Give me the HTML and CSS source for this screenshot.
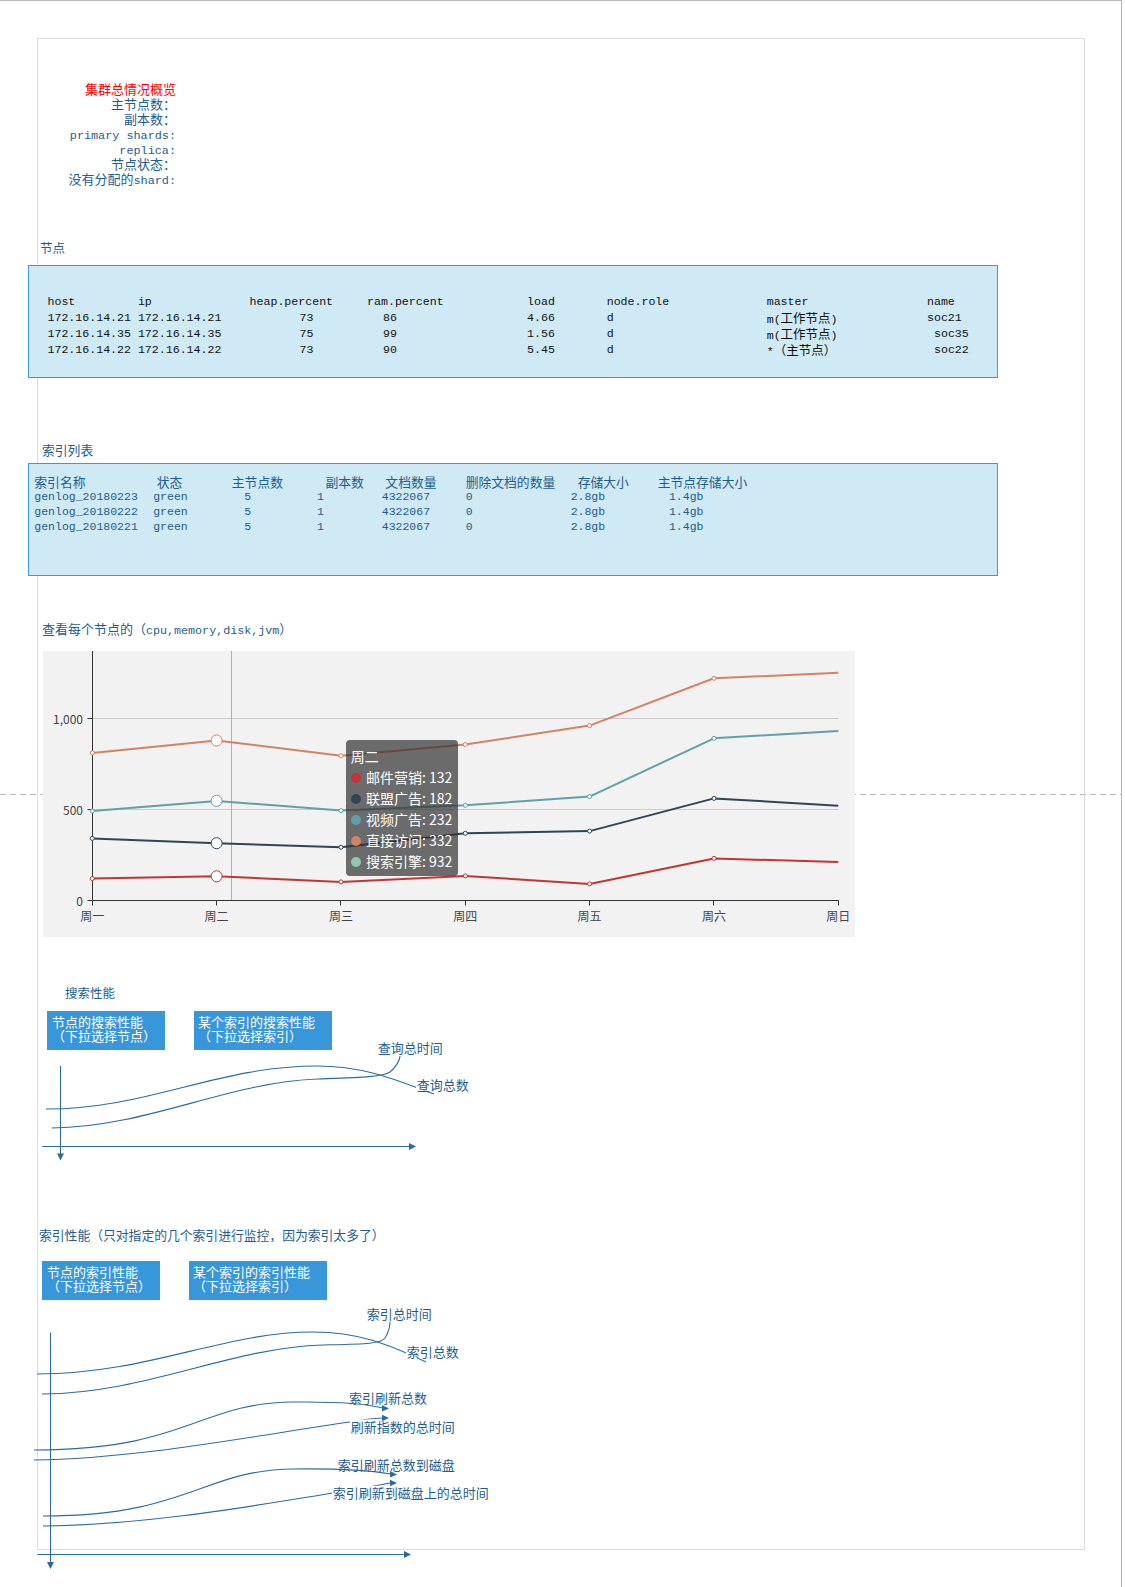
FILE: index.html
```html
<!DOCTYPE html>
<html lang="zh-CN">
<head>
<meta charset="utf-8">
<title>集群监控</title>
<link rel="stylesheet" href="styles.css">
</head>
<body>
<div class="viewport">
  <div class="page">
    <div class="summary">
      <div class="ln red">集群总情况概览</div>
      <div class="ln">主节点数：</div>
      <div class="ln">副本数：</div>
      <div class="ln"><span class="m">primary shards:</span></div>
      <div class="ln"><span class="m">replica:</span></div>
      <div class="ln">节点状态：</div>
      <div class="ln">没有分配的<span class="m">shard:</span></div>
    </div>

    <div class="h h-node">节点</div>
    <div class="nodebox">
      <div class="ngrid">
        <div>host</div><div>ip</div><div>heap.percent</div><div>ram.percent</div><div>load</div><div>node.role</div><div>master</div><div>name</div>
        <div>172.16.14.21</div><div>172.16.14.21</div><div class="o50">73</div><div class="o16">86</div><div>4.66</div><div>d</div><div>m(<span class="cj">工作节点</span>)</div><div>soc21</div>
        <div>172.16.14.35</div><div>172.16.14.35</div><div class="o50">75</div><div class="o16">99</div><div>1.56</div><div>d</div><div>m(<span class="cj">工作节点</span>)</div><div class="o7">soc35</div>
        <div>172.16.14.22</div><div>172.16.14.22</div><div class="o50">73</div><div class="o16">90</div><div>5.45</div><div>d</div><div>*<span class="cj">（主节点）</span></div><div class="o7">soc22</div>
      </div>
    </div>

    <div class="h h-idx">索引列表</div>
    <div class="idxbox">
      <div class="igrid">
        <div class="hd">索引名称</div><div class="hd o4">状态</div><div class="hd">主节点数</div><div class="hd o8">副本数</div><div class="hd o4">文档数量</div><div class="hd">删除文档的数量</div><div class="hd o7">存储大小</div><div class="hd">主节点存储大小</div>
        <div class="v">genlog_20180223</div><div class="v">green</div><div class="v o12">5</div><div class="v">1</div><div class="v">4322067</div><div class="v">0</div><div class="v">2.8gb</div><div class="v o11">1.4gb</div>
        <div class="v">genlog_20180222</div><div class="v">green</div><div class="v o12">5</div><div class="v">1</div><div class="v">4322067</div><div class="v">0</div><div class="v">2.8gb</div><div class="v o11">1.4gb</div>
        <div class="v">genlog_20180221</div><div class="v">green</div><div class="v o12">5</div><div class="v">1</div><div class="v">4322067</div><div class="v">0</div><div class="v">2.8gb</div><div class="v o11">1.4gb</div>
      </div>
    </div>

    <div class="h h-chart">查看每个节点的（<span class="m">cpu,memory,disk,jvm</span>）</div>
    <div class="chart">
      <svg class="chart-svg" width="812" height="286" viewBox="0 0 812 286">
        <g stroke="#cccccc" stroke-width="1">
          <line x1="49.5" y1="67.5" x2="795.5" y2="67.5"/>
          <line x1="49.5" y1="158.5" x2="795.5" y2="158.5"/>
        </g>
        <line x1="188.5" y1="0" x2="188.5" y2="249.5" stroke="#b0b0b0" stroke-width="1"/>
        <g stroke="#333333" stroke-width="1">
          <line x1="49.5" y1="0" x2="49.5" y2="249.5"/>
          <line x1="49.5" y1="249.5" x2="795.5" y2="249.5"/>
          <line x1="44.5" y1="249.5" x2="49.5" y2="249.5"/>
          <line x1="44.5" y1="158.5" x2="49.5" y2="158.5"/>
          <line x1="44.5" y1="67.5" x2="49.5" y2="67.5"/>
          <line x1="49.5" y1="249.5" x2="49.5" y2="254.5"/>
          <line x1="173.5" y1="249.5" x2="173.5" y2="254.5"/>
          <line x1="297.5" y1="249.5" x2="297.5" y2="254.5"/>
          <line x1="422.5" y1="249.5" x2="422.5" y2="254.5"/>
          <line x1="546.5" y1="249.5" x2="546.5" y2="254.5"/>
          <line x1="670.5" y1="249.5" x2="670.5" y2="254.5"/>
          <line x1="795.5" y1="249.5" x2="795.5" y2="254.5"/>
        </g>
        <g class="ylab" text-anchor="end">
          <text x="40" y="67.5">1,000</text>
          <text x="40" y="158.5">500</text>
          <text x="40" y="249.5">0</text>
        </g>
        <g class="xlab" text-anchor="middle">
          <text x="49.3" y="264">周一</text>
          <text x="173.6" y="264">周二</text>
          <text x="298" y="264">周三</text>
          <text x="422.3" y="264">周四</text>
          <text x="546.6" y="264">周五</text>
          <text x="671" y="264">周六</text>
          <text x="795.3" y="264">周日</text>
        </g>
        <g fill="none" stroke-width="2" stroke-linejoin="round">
          <polyline stroke="#c23531" points="49.3,227.5 173.6,225.3 298,230.9 422.3,224.9 546.6,232.9 671,207.4 795.3,211.1"/>
          <polyline stroke="#2f4554" points="49.3,187.4 173.6,192.2 298,196.2 422.3,182.3 546.6,180.1 671,147.4 795.3,154.7"/>
          <polyline stroke="#61a0a8" points="49.3,160.1 173.6,149.9 298,159.6 422.3,154.3 546.6,145.6 671,87.3 795.3,80"/>
          <polyline stroke="#d48265" points="49.3,101.9 173.6,89.5 298,104.8 422.3,93.5 546.6,74.6 671,27.3 795.3,21.8"/>
        </g>
        <g fill="#ffffff" stroke="#c23531" stroke-width="1">
          <circle cx="49.3" cy="227.5" r="2"/><circle cx="173.6" cy="225.3" r="5.5"/><circle cx="298" cy="230.9" r="2"/><circle cx="422.3" cy="224.9" r="2"/><circle cx="546.6" cy="232.9" r="2"/><circle cx="671" cy="207.4" r="2"/>
        </g>
        <g fill="#ffffff" stroke="#2f4554" stroke-width="1">
          <circle cx="49.3" cy="187.4" r="2"/><circle cx="173.6" cy="192.2" r="5.5"/><circle cx="298" cy="196.2" r="2"/><circle cx="422.3" cy="182.3" r="2"/><circle cx="546.6" cy="180.1" r="2"/><circle cx="671" cy="147.4" r="2"/>
        </g>
        <g fill="#ffffff" stroke="#61a0a8" stroke-width="1">
          <circle cx="49.3" cy="160.1" r="2"/><circle cx="173.6" cy="149.9" r="5.5"/><circle cx="298" cy="159.6" r="2"/><circle cx="422.3" cy="154.3" r="2"/><circle cx="546.6" cy="145.6" r="2"/><circle cx="671" cy="87.3" r="2"/>
        </g>
        <g fill="#ffffff" stroke="#d48265" stroke-width="1">
          <circle cx="49.3" cy="101.9" r="2"/><circle cx="173.6" cy="89.5" r="5.5"/><circle cx="298" cy="104.8" r="2"/><circle cx="422.3" cy="93.5" r="2"/><circle cx="546.6" cy="74.6" r="2"/><circle cx="671" cy="27.3" r="2"/>
        </g>
      </svg>
      <div class="tip">
        <div class="trow">周二</div>
        <div class="trow"><span class="dot c1"></span>邮件营销: 132</div>
        <div class="trow"><span class="dot c2"></span>联盟广告: 182</div>
        <div class="trow"><span class="dot c3"></span>视频广告: 232</div>
        <div class="trow"><span class="dot c4"></span>直接访问: 332</div>
        <div class="trow"><span class="dot c5"></span>搜索引擎: 932</div>
      </div>
    </div>

    <div class="h h-search">搜索性能</div>
    <div class="btns btns-search">
      <div class="btn w1">节点的搜索性能<br>（下拉选择节点）</div>
      <div class="btn w2">某个索引的搜索性能<br>（下拉选择索引）</div>
    </div>
    <svg class="diag s1" width="460" height="120" viewBox="0 0 460 120">
      <g fill="none" stroke="#2b6b9f" stroke-width="1.1">
        <path d="M8,59 C110,59 180,16 279,16 C330,16 365,33 396,44"/>
        <path d="M14,78 C110,77 190,32 280,29 C320,27.5 345,27 352,22 C358,17 362,10 362,6"/>
        <line x1="22.5" y1="16" x2="22.5" y2="105"/>
        <line x1="4.3" y1="96.5" x2="372" y2="96.5"/>
      </g>
      <g fill="#2b6b9f">
        <polygon points="19,103.5 26,103.5 22.5,110.5"/>
        <polygon points="371,93 371,100 378,96.5"/>
      </g>
      <g fill="#ffffff">
        <rect x="339" y="-9.5" width="66" height="13"/>
        <rect x="378" y="27.5" width="53" height="13"/>
      </g>
      <g class="lbl">
        <text x="339.7" y="-2.7">查询总时间</text>
        <text x="378.7" y="34">查询总数</text>
      </g>
    </svg>

    <div class="h h-iperf">索引性能（只对指定的几个索引进行监控，因为索引太多了）</div>
    <div class="btns btns-iperf">
      <div class="btn w1">节点的索引性能<br>（下拉选择节点）</div>
      <div class="btn w2">某个索引的索引性能<br>（下拉选择索引）</div>
    </div>
    <svg class="diag s2" width="460" height="270" viewBox="0 0 460 270">
      <g fill="none" stroke="#2b6b9f" stroke-width="1.1">
        <path d="M-1,74 C110,74 185,32 275,32 C320,32 350,44 388,62"/>
        <path d="M4,94 C110,93 190,48 285,45 C325,44 343,44 347,38 C350,33 352,27 352,21.7"/>
        <path d="M-4,150 C150,150 160,103 255,102 C300,101.5 330,104 345,108"/>
        <path d="M-4,160 C100,159 220,135 312,122 C325,120 335,118 345,118"/>
        <path d="M5,216 C150,216 165,170 255,169 C300,168.5 335,171 353,174"/>
        <path d="M5,226 C110,225 220,205 295,193 C320,189 340,185 353,183"/>
        <line x1="12.5" y1="32.7" x2="12.5" y2="263"/>
        <line x1="-0.7" y1="254.5" x2="367" y2="254.5"/>
      </g>
      <g fill="#ffffff">
        <rect x="328" y="6.8" width="66" height="13"/>
        <rect x="368" y="45.2" width="53" height="13"/>
        <rect x="312" y="119.5" width="105" height="13"/>
        <rect x="294" y="185.8" width="157" height="13"/>
      </g>
      <g fill="#2b6b9f">
        <polygon points="9,262 16,262 12.5,269"/>
        <polygon points="366,251 366,258 373,254.5"/>
        <polygon points="344,105 344,111.5 351,108.5"/>
        <polygon points="344,114.8 344,121.2 351,118"/>
        <polygon points="352,171 352,177.5 359,174.5"/>
        <polygon points="352,179.8 352,186.2 359,183"/>
      </g>
      <g class="lbl">
        <text x="328.7" y="13.3">索引总时间</text>
        <text x="368.7" y="51.7">索引总数</text>
        <text x="311" y="97.3">索引刷新总数</text>
        <text x="312.7" y="126">刷新指数的总时间</text>
        <text x="299.7" y="164">索引刷新总数到磁盘</text>
        <text x="294.7" y="192.3">索引刷新到磁盘上的总时间</text>
      </g>
    </svg>
  </div>
</div>
</body>
</html>
```

FILE: styles.css
```css
* { box-sizing: border-box; }

body {
  margin: 0;
  background: #ffffff;
  font-family: "Noto Sans CJK SC", "Liberation Sans", sans-serif;
}

.viewport {
  width: 1122px;
  height: 1587px;
  border-top: 1px solid #b8b8b8;
  border-right: 1px solid #b8b8b8;
  overflow: hidden;
  background-image: repeating-linear-gradient(90deg, #b8b8b8 0 6px, transparent 6px 10px);
  background-size: 100% 1px;
  background-position: 0 793px;
  background-repeat: no-repeat;
}

.page {
  margin: 37px 0 0 37px;
  width: 1048px;
  height: 1512px;
  border: 1px solid #dcdcdc;
  color: #1f5d8c;
  font-size: 13px;
}

.m {
  font-family: "Liberation Mono", monospace;
}

.summary {
  margin-top: 41.5px;
  width: 138px;
  text-align: right;
  font-size: 13px;
  line-height: 15px;
}

.summary .ln {
  height: 15px;
  white-space: nowrap;
}

.summary .m {
  font-size: 11.8px;
}

.red {
  color: #ff0000;
}

.h {
  height: 15px;
  line-height: 15px;
  font-size: 12.5px;
  white-space: nowrap;
}

.h-node { margin: 54px 0 0 2px; }
.h-idx { margin: 63.5px 0 0 4px; font-size: 12.8px; }
.h-chart { margin: 44.5px 0 0 4px; font-size: 13px; }
.h-chart .m { font-size: 11.7px; }
.h-search { margin: 47.8px 0 0 27px; font-size: 12.5px; }
.h-iperf { margin: 56.8px 0 0 1px; font-size: 12.8px; }

.nodebox {
  margin: 10.5px 0 0 -10px;
  width: 970px;
  height: 113px;
  border: 1px solid #3c98d9;
  background: #cfe9f5;
  padding: 28px 0 0 18.5px;
  color: #111111;
  font-family: "Liberation Mono", "Noto Sans CJK SC", monospace;
  font-size: 11.6px;
  line-height: 16px;
}

.ngrid {
  display: grid;
  grid-template-columns: 90.4px 111.7px 117.5px 160px 79.6px 160px 160.3px auto;
  grid-auto-rows: 16px;
  white-space: nowrap;
}

.cj {
  font-family: "Noto Sans CJK SC", sans-serif;
  font-size: 12.5px;
  line-height: 16px;
}

.o50 { padding-left: 50px; }
.o16 { padding-left: 16px; }
.o7 { padding-left: 7px; }
.o4 { padding-left: 3.6px; }
.o8 { padding-left: 8.3px; }
.o12 { padding-left: 12.5px; }
.o11 { padding-left: 11.3px; }

.idxbox {
  margin: 6.5px 0 0 -10px;
  width: 970px;
  height: 113px;
  border: 1px solid #3c98d9;
  background: #cfe9f5;
  padding: 9.5px 0 0 5.3px;
  color: #1f5d8c;
}

.igrid {
  display: grid;
  grid-template-columns: 118.9px 78.6px 85.3px 64.7px 83.9px 105px 87px auto;
  grid-auto-rows: 15px;
  line-height: 15px;
  white-space: nowrap;
}

.igrid .hd {
  font-size: 12.8px;
}

.igrid .v {
  font-family: "Liberation Mono", monospace;
  font-size: 11.5px;
}

.chart {
  position: relative;
  margin: 15.5px 0 0 5px;
  width: 812px;
  height: 286px;
  background: #f2f2f2;
}

.chart-svg {
  display: block;
}

.ylab text,
.xlab text {
  font-family: "Noto Sans CJK SC", sans-serif;
  font-size: 12px;
  fill: #444444;
  dominant-baseline: central;
}

.tip {
  position: absolute;
  left: 303px;
  top: 89px;
  width: 112px;
  height: 136px;
  padding: 6px 0 0 4.7px;
  background: rgba(50, 50, 50, 0.7);
  border-radius: 4px;
  color: #ffffff;
  font-size: 14px;
  line-height: 21px;
  white-space: nowrap;
}

.trow {
  display: flex;
  align-items: center;
  height: 21px;
}

.dot {
  width: 10px;
  height: 10px;
  border-radius: 50%;
  margin-right: 5.3px;
  flex: none;
}

.c1 { background: #c23531; }
.c2 { background: #2f4554; }
.c3 { background: #61a0a8; }
.c4 { background: #d48265; }
.c5 { background: #91c7ae; }

.btns {
  display: flex;
  gap: 29px;
}

.btns-search { margin: 11.2px 0 0 9px; }
.btns-iperf { margin: 19.2px 0 0 4px; }

.btn {
  height: 39px;
  padding: 4px 0 0 5px;
  background: #3897db;
  color: #ffffff;
  font-size: 13px;
  line-height: 14.5px;
  white-space: nowrap;
}

.w1 { width: 118px; }
.w2 { width: 138px; padding-left: 4px; }

.diag {
  display: block;
  overflow: visible;
}

.lbl text {
  font-family: "Noto Sans CJK SC", sans-serif;
  font-size: 13px;
  fill: #1f5d8c;
  dominant-baseline: central;
}
```
